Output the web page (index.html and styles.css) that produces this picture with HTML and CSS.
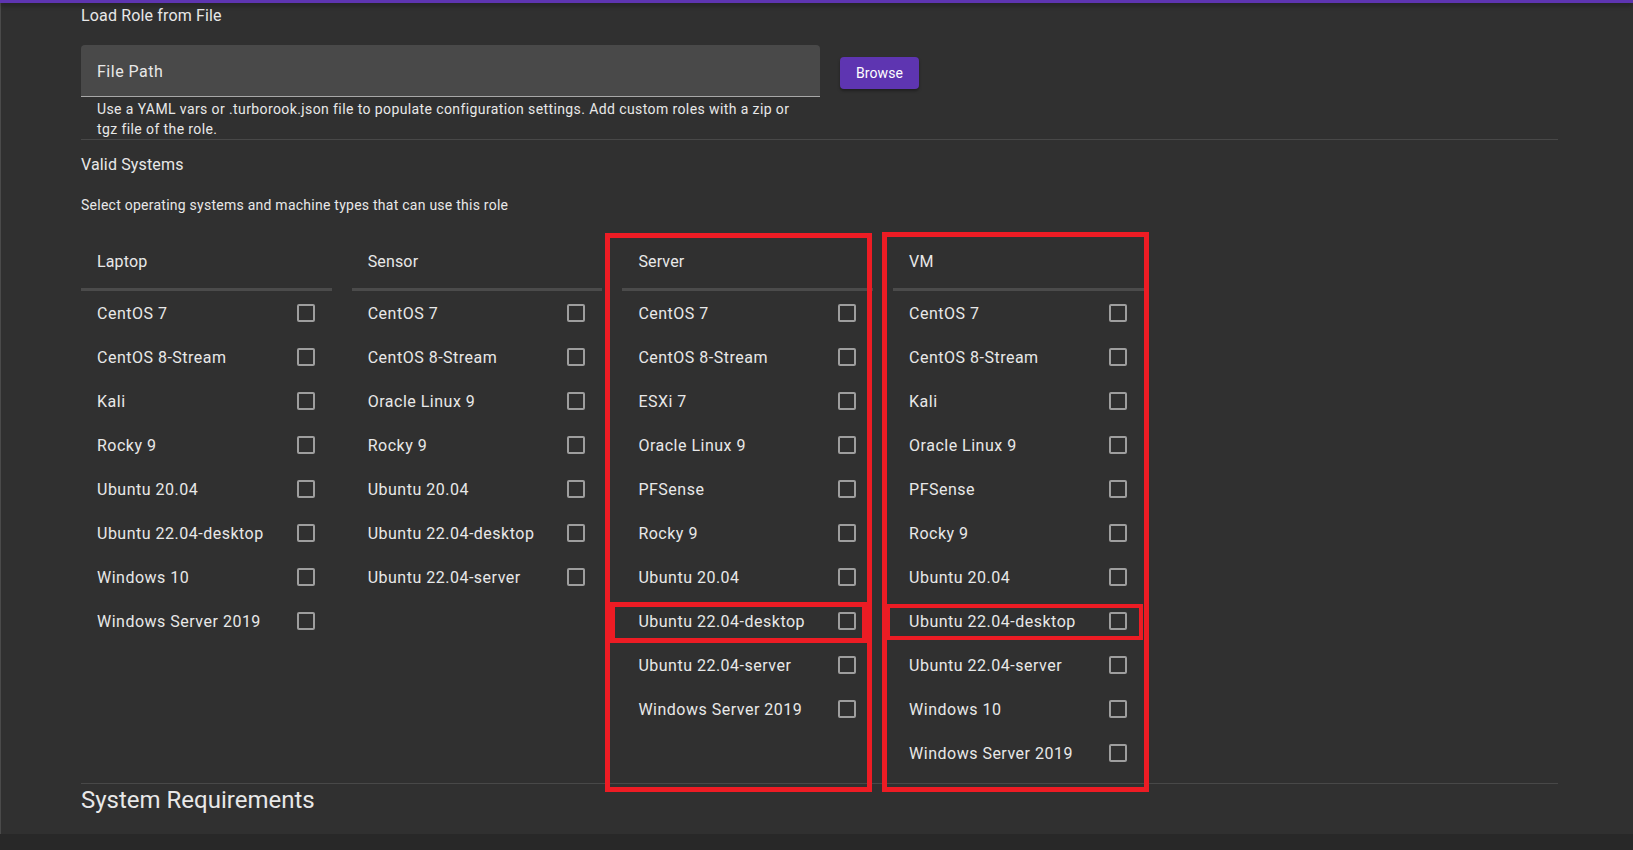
FILE: index.html
```html
<!DOCTYPE html>
<html lang="en">
<head>
<meta charset="utf-8">
<title>Role Editor</title>
<link rel="stylesheet" href="styles.css">
</head>
<body>
<div class="topbar"></div>
<main class="panel">
  <div class="section-title">Load Role from File</div>
  <div class="file-row">
    <div class="file-field">
      <div class="file-input"><span class="file-label">File Path</span></div>
      <div class="file-hint">Use a YAML vars or .turborook.json file to populate configuration settings. Add custom roles with a zip or<br>tgz file of the role.</div>
    </div>
    <button class="browse" type="button">Browse</button>
  </div>
  <hr class="divider">
  <div class="section-title valid-title">Valid Systems</div>
  <div class="subtitle">Select operating systems and machine types that can use this role</div>

  <div class="columns">
    <section class="col">
      <div class="col-head">Laptop</div>
      <div class="row"><span>CentOS 7</span><i class="cb"></i></div>
      <div class="row"><span>CentOS 8-Stream</span><i class="cb"></i></div>
      <div class="row"><span>Kali</span><i class="cb"></i></div>
      <div class="row"><span>Rocky 9</span><i class="cb"></i></div>
      <div class="row"><span>Ubuntu 20.04</span><i class="cb"></i></div>
      <div class="row"><span>Ubuntu 22.04-desktop</span><i class="cb"></i></div>
      <div class="row"><span>Windows 10</span><i class="cb"></i></div>
      <div class="row"><span>Windows Server 2019</span><i class="cb"></i></div>
    </section>
    <section class="col">
      <div class="col-head">Sensor</div>
      <div class="row"><span>CentOS 7</span><i class="cb"></i></div>
      <div class="row"><span>CentOS 8-Stream</span><i class="cb"></i></div>
      <div class="row"><span>Oracle Linux 9</span><i class="cb"></i></div>
      <div class="row"><span>Rocky 9</span><i class="cb"></i></div>
      <div class="row"><span>Ubuntu 20.04</span><i class="cb"></i></div>
      <div class="row"><span>Ubuntu 22.04-desktop</span><i class="cb"></i></div>
      <div class="row"><span>Ubuntu 22.04-server</span><i class="cb"></i></div>
    </section>
    <section class="col">
      <div class="col-head">Server</div>
      <div class="row"><span>CentOS 7</span><i class="cb"></i></div>
      <div class="row"><span>CentOS 8-Stream</span><i class="cb"></i></div>
      <div class="row"><span>ESXi 7</span><i class="cb"></i></div>
      <div class="row"><span>Oracle Linux 9</span><i class="cb"></i></div>
      <div class="row"><span>PFSense</span><i class="cb"></i></div>
      <div class="row"><span>Rocky 9</span><i class="cb"></i></div>
      <div class="row"><span>Ubuntu 20.04</span><i class="cb"></i></div>
      <div class="row"><span>Ubuntu 22.04-desktop</span><i class="cb"></i></div>
      <div class="row"><span>Ubuntu 22.04-server</span><i class="cb"></i></div>
      <div class="row"><span>Windows Server 2019</span><i class="cb"></i></div>
    </section>
    <section class="col">
      <div class="col-head">VM</div>
      <div class="row"><span>CentOS 7</span><i class="cb"></i></div>
      <div class="row"><span>CentOS 8-Stream</span><i class="cb"></i></div>
      <div class="row"><span>Kali</span><i class="cb"></i></div>
      <div class="row"><span>Oracle Linux 9</span><i class="cb"></i></div>
      <div class="row"><span>PFSense</span><i class="cb"></i></div>
      <div class="row"><span>Rocky 9</span><i class="cb"></i></div>
      <div class="row"><span>Ubuntu 20.04</span><i class="cb"></i></div>
      <div class="row"><span>Ubuntu 22.04-desktop</span><i class="cb"></i></div>
      <div class="row"><span>Ubuntu 22.04-server</span><i class="cb"></i></div>
      <div class="row"><span>Windows 10</span><i class="cb"></i></div>
      <div class="row"><span>Windows Server 2019</span><i class="cb"></i></div>
    </section>
  </div>
  <hr class="divider bottom-divider">
  <h2 class="req-title">System Requirements</h2>
</main>

<div class="mark mark-server"></div>
<div class="mark mark-vm"></div>
<div class="mark mark-server-row"></div>
<div class="mark mark-vm-row"></div>
</body>
</html>
```
FILE: styles.css
```css
html, body {
  margin: 0;
  padding: 0;
}
body {
  background: #282828;
  font-family: Roboto, "Noto Sans", "Liberation Sans", sans-serif;
  color: #e8e8e8;
  width: 1633px;
  height: 850px;
  overflow: hidden;
  position: relative;
}
.topbar {
  height: 3px;
  background: #5e35b1;
  position: relative;
  z-index: 2;
  box-shadow: 0 2px 5px rgba(0, 0, 0, 0.45);
}
.panel {
  background: #303030;
  border-left: 1px solid #4a4a4a;
  padding: 1px 75px 18px 80px;
}
.section-title {
  font-size: 16px;
  line-height: 24px;
  letter-spacing: 0.15px;
}
.file-row {
  display: flex;
  align-items: flex-start;
  gap: 20px;
  margin-top: 17px;
}
.file-field {
  width: 739px;
}
.file-input {
  height: 51px;
  background: #494949;
  border-radius: 4px 4px 0 0;
  border-bottom: 1px solid #a8a8a8;
  display: flex;
  align-items: center;
  padding: 0 16px;
}
.file-label {
  font-size: 16px;
  letter-spacing: 0.5px;
  padding-top: 1px;
}
.file-hint {
  font-size: 14px;
  line-height: 19.5px;
  padding: 3px 16px 0;
  white-space: nowrap;
  letter-spacing: 0.4px;
}
.browse {
  margin-top: 12px;
  height: 32px;
  padding: 0 16px;
  border: none;
  border-radius: 4px;
  background: #5e35b1;
  color: #fff;
  font-family: Roboto, "Noto Sans", sans-serif;
  font-size: 14px;
  letter-spacing: 0.1px;
  box-shadow: 0 2px 3px rgba(0, 0, 0, 0.35);
}
.divider {
  border: none;
  border-top: 1px solid #484848;
  margin: 0;
}
.valid-title {
  margin-top: 13px;
}
.subtitle {
  font-size: 14px;
  line-height: 20px;
  margin-top: 18px;
  letter-spacing: 0.25px;
}
.columns {
  display: grid;
  grid-template-columns: repeat(4, 250.7px);
  column-gap: 20px;
  align-items: start;
  margin-top: 25px;
}
.col-head {
  height: 38px;
  padding: 10px 16px 0;
  font-size: 16px;
  line-height: 24px;
  letter-spacing: 0.15px;
  border-bottom: 3px solid #4b4b4b;
}
.row {
  height: 44px;
  display: flex;
  align-items: center;
  justify-content: space-between;
  padding: 0 17px 0 16px;
  font-size: 16px;
  letter-spacing: 0.5px;
}
.cb {
  width: 14px;
  height: 14px;
  border: 2px solid #9e9e9e;
  border-radius: 2px;
  flex: none;
}
.bottom-divider {
  margin-top: 8px;
}
.req-title {
  margin: 0;
  font-size: 24px;
  line-height: 32px;
  font-weight: 400;
}
.mark {
  position: absolute;
  border: 5px solid #ed1c24;
  box-sizing: border-box;
  z-index: 3;
}
.mark-server {
  left: 605px;
  top: 233px;
  width: 267px;
  height: 559px;
}
.mark-vm {
  left: 882px;
  top: 232px;
  width: 267px;
  height: 560px;
}
.mark-server-row {
  left: 610px;
  top: 602px;
  width: 257px;
  height: 41px;
}
.mark-vm-row {
  left: 886px;
  top: 604px;
  width: 257px;
  height: 36px;
  border-width: 4.5px;
}
```
